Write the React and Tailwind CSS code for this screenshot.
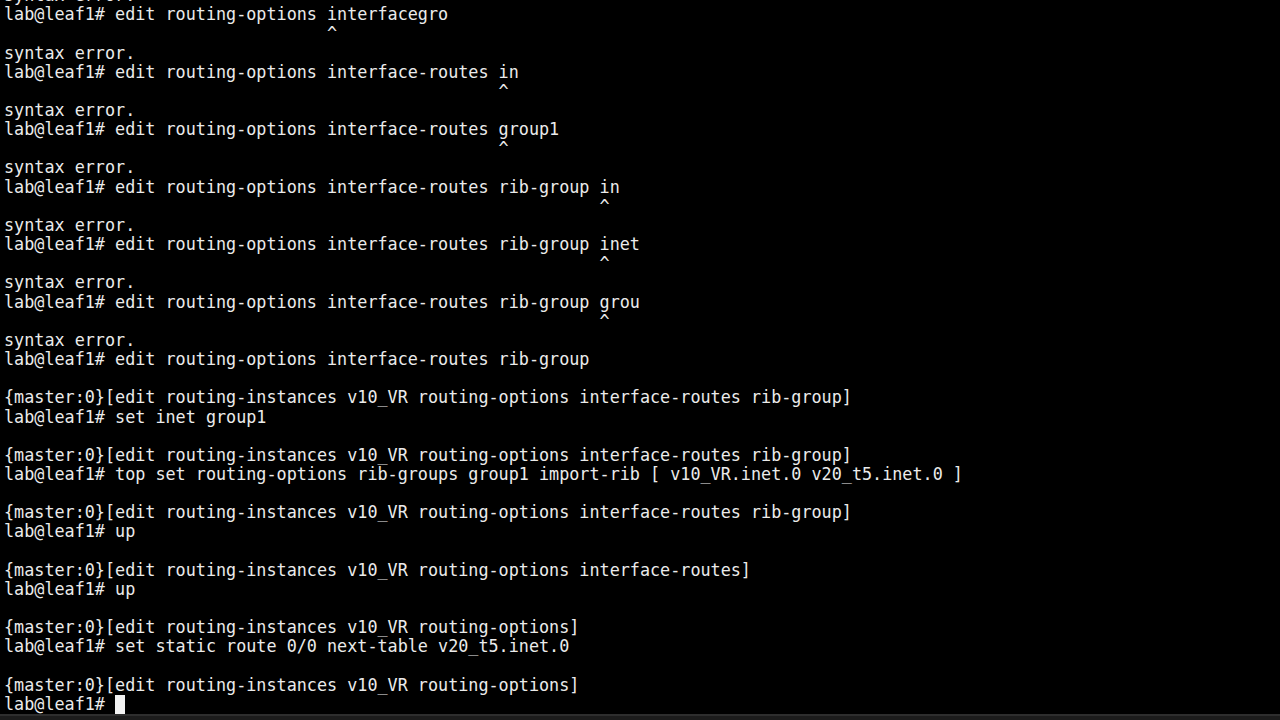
const master = (path) => `{master:0}[edit routing-instances v10_VR ${path}]`;
const caret = (col) => " ".repeat(col) + "^";

const lines = [
  "syntax error.",
  "lab@leaf1# edit routing-options interfacegro",
  caret(32),
  "syntax error.",
  "lab@leaf1# edit routing-options interface-routes in",
  caret(49),
  "syntax error.",
  "lab@leaf1# edit routing-options interface-routes group1",
  caret(49),
  "syntax error.",
  "lab@leaf1# edit routing-options interface-routes rib-group in",
  caret(59),
  "syntax error.",
  "lab@leaf1# edit routing-options interface-routes rib-group inet",
  caret(59),
  "syntax error.",
  "lab@leaf1# edit routing-options interface-routes rib-group grou",
  caret(59),
  "syntax error.",
  "lab@leaf1# edit routing-options interface-routes rib-group",
  "",
  master("routing-options interface-routes rib-group"),
  "lab@leaf1# set inet group1",
  "",
  master("routing-options interface-routes rib-group"),
  "lab@leaf1# top set routing-options rib-groups group1 import-rib [ v10_VR.inet.0 v20_t5.inet.0 ]",
  "",
  master("routing-options interface-routes rib-group"),
  "lab@leaf1# up",
  "",
  master("routing-options interface-routes"),
  "lab@leaf1# up",
  "",
  master("routing-options"),
  "lab@leaf1# set static route 0/0 next-table v20_t5.inet.0",
  "",
  master("routing-options"),
];

export default function App() {
  return (
    <div className="flex h-[720px] w-[1280px] flex-col overflow-hidden bg-black">
      <div
        className="flex h-[714px] flex-col justify-end overflow-hidden pl-[4px] text-[16.77px] leading-[19.17px] text-[#ebebeb]"
        style={{ fontFamily: '"DejaVu Sans Mono", "Liberation Mono", monospace' }}
      >
        {lines.map((line, i) => (
          <div key={i} className="h-[19.17px] shrink-0 whitespace-pre">
            {line}
          </div>
        ))}
        <div className="flex h-[19.17px] shrink-0 whitespace-pre">
          <span>lab@leaf1# </span>
          <span className="inline-block h-[19px] w-[10px] bg-[#f2f2f2]" />
        </div>
      </div>
      <div className="h-[2px] bg-[#2e2e2e]" />
      <div className="flex-1 bg-[#1c1c1c]" />
    </div>
  );
}
